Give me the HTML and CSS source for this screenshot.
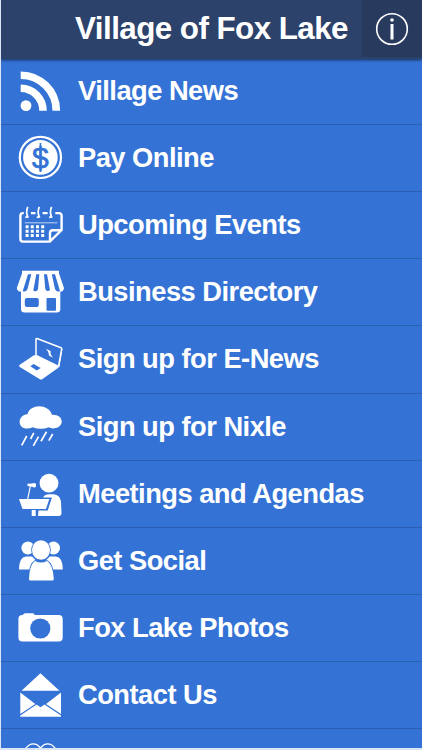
FILE: index.html
```html
<!DOCTYPE html>
<html lang="en">
<head>
    <meta charset="UTF-8">
    <meta name="viewport" content="width=device-width, initial-scale=1.0">
    <title>Village of Fox Lake</title>
    <link rel="stylesheet" href="styles.css">
</head>
<body>
    <div class="main">
        <div class="topBar">
            <h1>Village of Fox Lake</h1>
            <a href="#" class="infoBtn">
                <svg viewBox="0 0 34 34">
                    <circle cx="17" cy="17" r="15.3" fill="none" stroke="#fff" stroke-width="1.6"/>
                    <circle cx="17" cy="8" r="1.8"/>
                    <path d="M15.5 12h3v15.500h-3z"/>
                </svg>
            </a>
        </div>
        <ul class="list">
            <li><a href="#">
                <svg viewBox="0 0 50 50">
                    <circle cx="10" cy="39.6" r="5.4"/>
                    <path class="rss" d="M4.7 9.2a35.5 35.5 0 0 1 35.6 35.5M4.7 22.2a22.4 22.4 0 0 1 22.3 22.5"/>
                </svg>
                <span>Village News</span>
            </a></li>
            <li><a href="#">
                <svg viewBox="0 0 50 50">
                    <circle class="line" cx="24.4" cy="24.4" r="20.6" stroke-width="2.2"/>
                    <circle cx="24.4" cy="24.4" r="17.3"/>
                    <text class="dollar" x="24.4" y="35">$</text>
                    <path class="cut" d="M23.6 10h1.600v29h-1.600z"/>
                </svg>
                <span>Pay Online</span>
            </a></li>
            <li><a href="#">
                <svg viewBox="0 0 50 50">
                    <path class="line" stroke-width="2.4" d="M7.8 13.1H7q-2.6 0-2.6 2.6V39q0 2.6 2.6 2.6h26.8L45.6 30V15.700q0-2.600-2.600-2.600h-3.700M15 13.100h4.500M26.600 13.100h5M34 41.500V33q0-2.800 2.800-2.800h8.700"/>
                    <path class="line" stroke-width="1.7" d="M11.8 6.8q-2.300 5.500 0 10l-2.500.5M23.300 6.800q-2.300 5.500 0 10l-2.500.5M35.600 6.800q-2.300 5.500 0 10l-2.500.5"/>
                    <path class="line" stroke-width=".7" d="M8.7 22.8h32.6"/>
                    <path class="line" stroke-width="3" stroke-dasharray="3 2.2" d="M9.6 26.8h19M9.6 31.2h19M9.6 35.6h19"/>
                </svg>
                <span>Upcoming Events</span>
            </a></li>
            <li><a href="#">
                <svg viewBox="0 0 50 50">
                    <path d="M6 3.8h37v2.7l5 14.5q-.4 3.5-3.7 3.7V42q0 3.5-3.5 3.500h-32Q5 45.500 5 42V24.700Q1.300 24.500.8 21L6 6.500z"/>
                    <path class="cut" d="M12 7.2h3.3L11.5 22q-1.400 3.500-4.800 2.200zM20.300 7.200h3l-1.300 15q-1.400 3.600-4.700 1.200zM28 7.200h3l3 16q-3.400 2-4.700-1.200zM35.800 7.200H39l5 17q-3.500 1.200-5-2.200z"/>
                    <rect class="cut" x="8.8" y="31" width="14" height="9" rx="2"/>
                    <rect class="cut" x="30.5" y="31" width="9.5" height="12.8" rx="1"/>
                </svg>
                <span>Business Directory</span>
            </a></li>
            <li><a href="#">
                <svg viewBox="0 0 50 50">
                    <path class="line" stroke-width="1.5" d="M20 21V5.200q0-1 1-.7l24 9.200q.8.400.7 1.200l-3.200 17.500L20 21.500"/>
                    <path d="M17.5 21.5q1.5-1 3 0L42 32.300q1 .8 0 1.800L26.500 45q-1.500 1-3 0L3.800 33q-1.500-1 0-2.200zM42.700 32.500l2.800-18 1 .5-3 17.500z"/>
                    <path class="cut" d="M14.3 32.3l3.3-2.3 7 4-3.8 2.6z"/>
                    <path d="M30 14.800l4.500 2.200.2 3.200 2.300 3.500-4-2.200-.7-3.500z"/>
                </svg>
                <span>Sign up for E-News</span>
            </a></li>
            <li><a href="#">
                <svg viewBox="0 0 50 50">
                    <path d="M11.5 12.2C14 1.700 32.500 1.400 36 12.900c12.500-.7 13 13.300 1.500 13.500q-3 0-4.700-1.100-7.700 3-16.300 0-2.500 1.400-6.500 1.200C1.200 25.500 1.500 13 11.500 12.200z"/>
                    <path class="line" stroke-width="1.7" d="M10.700 34l-5 9.300M17.800 30.800l-3.200 6.200M22.500 34.600l-5.200 9.300M30.500 29.800L25 39.300M36.700 32l-3.900 6.600"/>
                </svg>
                <span>Sign up for Nixle</span>
            </a></li>
            <li><a href="#">
                <svg viewBox="0 0 50 50">
                    <circle cx="33" cy="14.2" r="9.4"/>
                    <path d="M27 28.600q2-3.300 6-3.300h4q7 .2 8 7.200l.5 12q0 2.400-2.400 2.400H22l.5-5.300h9.200l4.200-13.100z"/>
                    <path d="M3 30l30.300-.1-3.300 10H6.500zM15.700 41h4v6h-4z"/>
                    <path d="M11.500 14.800l4.500-.2q3.200-1.400 4 .6v2.400q-1 1.700-4 .1l-4.500-.6z"/>
                    <path class="line" stroke-width="1.2" d="M14.500 16.500L11.700 30"/>
                </svg>
                <span>Meetings and Agendas</span>
            </a></li>
            <li><a href="#">
                <svg viewBox="0 0 50 50">
                    <circle cx="11.9" cy="12" r="6.5"/>
                    <circle cx="37.5" cy="12" r="6.5"/>
                    <path d="M3 33.400q0-12.200 7-12.900h6l4 4-6 9zM46.800 33.400q0-12.200-7-12.900h-6l-4 4 6 9z"/>
                    <ellipse class="gap" cx="25" cy="14" rx="9" ry="9.8"/>
                    <path class="gap" d="M13 43q.5-14.800 6-18 6 3 12 0 6 3.200 6.800 18 0 1.500-1.500 1.500h-22Q13 44.500 13 43z"/>
                </svg>
                <span>Get Social</span>
            </a></li>
            <li><a href="#">
                <svg viewBox="0 0 50 50">
                    <path d="M6.5 12l2.3-1.800h8.400L19 12h23.700q4 0 4 4v18.500q0 4-4 4H6.400q-4 0-4-4V16q0-4 4.100-4z"/>
                    <circle class="cut" cx="24.3" cy="25.5" r="10.1"/>
                </svg>
                <span>Fox Lake Photos</span>
            </a></li>
            <li><a href="#">
                <svg viewBox="0 0 50 50">
                    <path d="M24.4 3.3L43.5 20.7H5.500z"/>
                    <path d="M4.3 22.5l15 11.600L4.300 44zM45 22.500L30 34.100 45 44zM20.500 34.500l4 2.800 4-2.800L45 45.500v1.300H4.300v-1.300z"/>
                </svg>
                <span>Contact Us</span>
            </a></li>
            <li><a href="#">
                <svg viewBox="0 0 50 50">
                    <path class="line" stroke-width="1.3" d="M24.5 45L9 26C2 15 15-2 24.500 10C34-2 47 15 40 26z"/>
                </svg>
            </a></li>
        </ul>
    </div>
</body>
</html>
```
FILE: styles.css
```css
*{
    margin: 0;
    padding: 0;
    box-sizing: border-box;
}
ul{
    list-style: none;
}
a{
    text-decoration: none;
    color: #fff;
}
body{
    background: #dbe5f5;
    font-family: "Liberation Sans", Arial, sans-serif;
    font-weight: bold;
    color: #fff;
    padding-left: 1px;
    overflow: hidden;
}
.main{
    height: 748px;
    overflow: hidden;
    background: #3473d5;
}
.topBar{
    position: relative;
    z-index: 1;
    display: flex;
    height: 59px;
    background: #2c426b;
    box-shadow: 0 1px 3px rgba(0,0,0,.6);
}
.topBar h1{
    flex: 1;
    padding-right: 14px;
    text-align: right;
    font-size: 31.4px;
    letter-spacing: -.57px;
    line-height: 57px;
    white-space: nowrap;
}
.infoBtn{
    display: flex;
    align-items: center;
    justify-content: center;
    width: 60px;
    height: 57px;
    background: #283a5e;
}
.infoBtn svg{
    width: 34px;
    height: 34px;
    fill: #fff;
}
/* first row slides under the bar */
.list{
    margin-top: -1.4px;
}
.list a{
    display: flex;
    align-items: center;
    height: 67.2px;
    padding-left: 15px;
    border-bottom: 1px solid #2b5fb2;
    font-size: 27.3px;
    letter-spacing: -.52px;
    white-space: nowrap;
}
.list svg{
    flex: none;
    width: 50px;
    height: 50px;
    margin-right: 12px;
    fill: #fff;
}
.list .line,
.list .rss{
    fill: none;
    stroke: #fff;
}
.list .rss{
    stroke-width: 7.6;
}
.list .cut{
    fill: #3473d5;
}
.list .gap{
    stroke: #3473d5;
    stroke-width: 1.6;
    paint-order: stroke;
}
.list .dollar{
    fill: #3473d5;
    font: normal 30px "Liberation Sans", Arial, sans-serif;
    stroke: #3473d5;
    stroke-width: .7;
    letter-spacing: 0;
    text-anchor: middle;
}
```
